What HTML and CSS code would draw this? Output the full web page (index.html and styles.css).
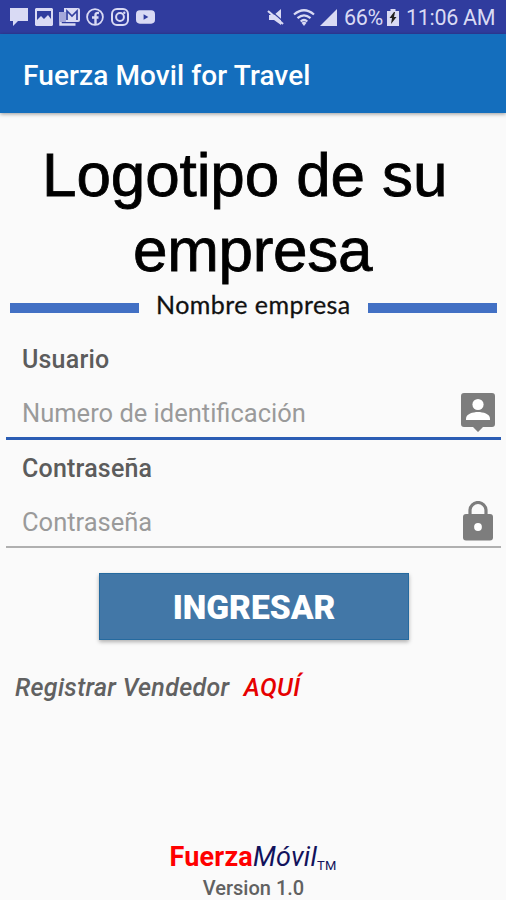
FILE: index.html
```html
<!DOCTYPE html>
<html lang="es">
<head>
  <meta charset="UTF-8" />
  <meta name="viewport" content="width=device-width, initial-scale=1.0" />
  <title>Fuerza Movil for Travel</title>
  <link rel="stylesheet" href="styles.css">
</head>
<body>
  <div class="status">
    <div class="notificaciones">
      <svg width="18" height="18" viewBox="0 0 18 18"><path d="M0 0h18v13H8l-5 5v-5H0z" fill="currentColor"/></svg>
      <svg width="18" height="18" viewBox="0 0 18 18"><path fill-rule="evenodd" d="M1 0h16l1 1v16l-1 1H1l-1-1V1zM2 3v9l4-4 3 3 4-4 3 4V3z" fill="currentColor"/></svg>
      <svg width="21" height="18" viewBox="0 0 21 18"><path d="M1.500 4v12.500h15" fill="none" stroke="currentColor" stroke-width="2.500"/><path d="M5 0h14q2 0 2 2v10q0 2-2 2H5z" fill="currentColor"/><path d="M1 4h6v10H1z" fill="#a5a7da"/><path d="M8 12V3l5 5 5-5v9" fill="none" stroke="#3440a0" stroke-width="1.700"/></svg>
      <svg width="18" height="18" viewBox="0 0 18 18"><circle cx="9" cy="9" r="7.900" fill="none" stroke="currentColor" stroke-width="1.800"/><path d="M9.500 17V7q0-2.500 3.500-2M6 9.500h6.500" fill="none" stroke="currentColor" stroke-width="2.400"/></svg>
      <svg width="18" height="18" viewBox="0 0 18 18"><rect x="1" y="1" width="16" height="16" rx="5" fill="none" stroke="currentColor" stroke-width="2"/><circle cx="9" cy="9" r="3.900" fill="none" stroke="currentColor" stroke-width="2"/><circle cx="13.300" cy="4.700" r="1.200" fill="currentColor"/></svg>
      <svg width="19" height="14" viewBox="0 0 20 14"><path fill-rule="evenodd" d="M4 0h12q4 0 4 4v6q0 4-4 4H4q-4 0-4-4V4q0-4 4-4zM8 4v6l5-3z" fill="currentColor"/></svg>
    </div>
    <div class="sistema">
      <svg class="mudo" width="18" height="17" viewBox="0 0 18 17"><path d="M2 6h5l7-6v16l-7-5H2z" fill="currentColor"/><path d="M2 0l16 14" stroke="#303c9e" stroke-width="1.200"/><path d="M1 2l15 13" stroke="currentColor" stroke-width="2.200"/></svg>
      <svg class="wifi" width="22" height="17" viewBox="0 0 22 17"><g fill="none" stroke="currentColor" stroke-width="2.200"><path d="M1 5.500Q11-3 21 5.500"/><path d="M4.500 9.200Q11 3.500 17.500 9.200"/><path d="M7.700 12.500Q11 9.500 14.300 12.500"/></g><path d="M8.500 13.700Q11 12 13.500 13.700L11 17z" fill="currentColor"/></svg>
      <svg class="senal" width="17" height="17" viewBox="0 0 17 17"><path d="M0 17L17 0v17z" fill="currentColor"/></svg>
      <span class="porcentaje">66%</span>
      <svg class="bateria" width="12" height="17" viewBox="0 0 12 17"><path d="M3.500 0h5v2H12v15H0V2h3.500z" fill="currentColor"/><path d="M7 3L2.500 9H5l-1 6 5.500-7H7l1-5z" fill="#202020"/></svg>
      <span class="hora">11:06 AM</span>
    </div>
  </div>

  <header class="barra">
    <h1>Fuerza Movil for Travel</h1>
  </header>

  <main>
    <div class="logotipo">
      <div class="linea1">Logotipo de su</div>
      <div class="linea2">empresa</div>
    </div>
    <div class="empresa"><span>Nombre empresa</span></div>

    <form>
      <div class="campo">
        <label for="usuario">Usuario</label>
        <div class="entrada activa">
          <input type="text" id="usuario" placeholder="Numero de identificación" />
          <svg width="34" height="40" viewBox="0 0 34 40"><path d="M3 0h28q3 0 3 3v28q0 3-3 3h-9l-5 5-5-5H3q-3 0-3-3V3q0-3 3-3z" fill="#7d7d7d"/><circle cx="17" cy="11.500" r="5.600" fill="#fff"/><path d="M5 27v-1.500C5 21 12 19 17 19s12 2 12 6.500V27z" fill="#fff"/></svg>
        </div>
      </div>
      <div class="campo">
        <label for="clave">Contraseña</label>
        <div class="entrada">
          <input type="password" id="clave" placeholder="Contraseña" />
          <svg width="34" height="42" viewBox="0 0 34 42"><path d="M9 14V9.500a8 8 0 0 1 16 0V14" fill="none" stroke="#7d7d7d" stroke-width="3.200"/><rect x="2" y="13" width="30" height="26.500" rx="3" fill="#7d7d7d"/><circle cx="17" cy="26" r="3.900" fill="#fff"/></svg>
        </div>
      </div>
      <button type="button">INGRESAR</button>
    </form>

    <p class="registro">Registrar Vendedor <a>AQUÍ</a></p>
  </main>

  <footer>
    <div class="marca"><b>Fuerza</b><i>Móvil</i><small>TM</small></div>
    <div class="version">Version 1.0</div>
  </footer>
</body>
</html>
```
FILE: styles.css
```css
* {
  box-sizing: border-box;
}

body {
  margin: 0;
  height: 900px;
  overflow: hidden;
  display: flex;
  flex-direction: column;
  font-family: Roboto, sans-serif;
  background: #fafafa;
  color: #616161;
}

svg {
  display: block;
  flex: none;
}

/* barra de estado */
.status {
  height: 34px;
  flex: none;
  display: flex;
  justify-content: space-between;
  padding: 0 11px 0 10px;
  background: #303c9e;
  color: #d9daf4;
}

.notificaciones,
.sistema {
  display: flex;
  align-items: center;
}

.notificaciones {
  gap: 7px;
}

.notificaciones svg:nth-child(3) {
  margin-left: -1px;
}

.notificaciones svg:nth-child(4) {
  margin-left: -1px;
}

.sistema {
  font-size: 21.5px;
  line-height: 38px;
  white-space: nowrap;
}

.sistema span {
  padding-top: 1px;
}

.wifi {
  margin-left: 8px;
}

.senal {
  margin-left: 5px;
}

.porcentaje {
  width: 39px;
  margin-left: 7px;
  letter-spacing: -0.3px;
}

.bateria {
  margin-left: 4px;
}

.hora {
  width: 89px;
  margin-left: 7px;
  letter-spacing: -0.3px;
}

.barra {
  height: 79px;
  flex: none;
  padding-left: 23px;
  background: #146ebd;
  box-shadow: 0 1px 4px rgba(0, 0, 0, 0.4);
}

h1 {
  margin: 0;
  font-size: 28px;
  font-weight: 500;
  letter-spacing: 0.1px;
  line-height: 83px;
  color: #fff;
}

main {
  flex: none;
  height: 722px;
  padding: 24px 5px 0 6px;
}

.logotipo {
  font-family: "Liberation Sans", Arial, sans-serif;
  font-size: 62px;
  line-height: 75px;
  color: #000;
  -webkit-text-stroke: 0.8px #000;
}

.linea1 {
  padding-left: 36px;
  letter-spacing: -0.1px;
}

.linea2 {
  padding-left: 127px;
  letter-spacing: -0.3px;
}

.empresa {
  display: flex;
  align-items: center;
  gap: 17px;
  height: 38px;
  padding: 0 4px;
  font-family: Lato, sans-serif;
  font-size: 25px;
  color: #111;
}

.empresa::before,
.empresa::after {
  content: "";
  flex: 1;
  height: 10px;
  margin-top: 3px;
  background: #4270c4;
}

.empresa span {
  width: 195px;
  margin-top: -5px;
  letter-spacing: 0.45px;
  -webkit-text-stroke: 0.3px #111;
  white-space: nowrap;
}

form {
  padding-top: 15px;
}

.campo {
  height: 109px;
}

label {
  display: block;
  padding-left: 16px;
  font-size: 25px;
  font-weight: 500;
  letter-spacing: 0.2px;
  line-height: 40px;
  color: #5c5c5c;
}

.entrada {
  display: flex;
  align-items: center;
  height: 59px;
  padding: 8px 6px 0 16px;
  border-bottom: 2px solid #b0b0b0;
}

.activa {
  height: 60px;
  border-bottom: 3px solid #2b5db4;
}

input {
  flex: 1;
  min-width: 0;
  padding: 1px 0 0;
  border: none;
  outline: none;
  background: none;
  font: 25.500px Roboto, sans-serif;
}

input::placeholder {
  color: #9a9a9a;
}

button {
  display: block;
  width: 310px;
  height: 67px;
  margin: 15px 0 0 93px;
  padding: 1px 0 0;
  border: 1px solid #256a9f;
  background: #4277a7;
  color: #fff;
  font: 900 33.500px Roboto, sans-serif;
  box-shadow: 0 2px 4px rgba(0, 0, 0, 0.3);
}

.registro {
  margin: 29px 0 0 9px;
  font-size: 25px;
  font-style: italic;
  font-weight: 500;
  letter-spacing: 0.3px;
  line-height: 38px;
}

.registro a {
  margin-left: 8px;
  color: #e60000;
}

footer {
  flex: none;
  height: 65px;
  padding-top: 5px;
  text-align: center;
}

.marca {
  height: 33px;
  font-size: 27px;
  line-height: 34px;
  letter-spacing: 0.2px;
  color: #12125c;
}

.marca b {
  color: #f00;
}

.marca small {
  font-size: 13px;
  line-height: 1;
  vertical-align: -4px;
}

.version {
  padding-left: 1px;
  font-size: 20px;
  font-weight: 500;
  line-height: 30px;
}
```
